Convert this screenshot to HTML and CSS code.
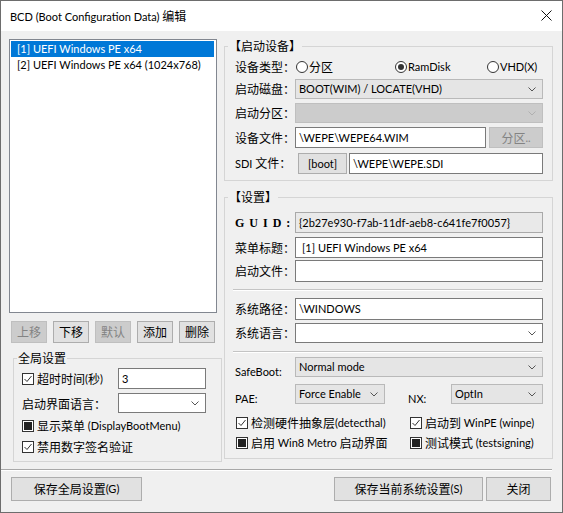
FILE: index.html
```html
<!DOCTYPE html>
<html lang="zh-CN">
<head>
<meta charset="utf-8">
<title>BCD 编辑</title>
<link rel="stylesheet" href="styles.css">
</head>
<body>
<div class="window">
  <div class="titlebar">
    <span class="title">BCD (Boot Configuration Data) <span class="z">编辑</span></span>
    <svg class="close" width="11" height="11" viewBox="0 0 11 11"><path d="M0.5 0.5L10.5 10.5M10.5 0.5L0.5 10.5" stroke="#111" stroke-width="1" fill="none"/></svg>
  </div>
  <div class="client">
    <div class="main">
      <div class="leftcol">
        <div class="listbox">
          <div class="item sel">[1] UEFI Windows PE x64</div>
          <div class="item">[2] UEFI Windows PE x64 (1024x768)</div>
        </div>
        <div class="btnrow">
          <span class="btn sbtn dis z">上移</span>
          <span class="btn sbtn z">下移</span>
          <span class="btn sbtn dis z">默认</span>
          <span class="btn sbtn z">添加</span>
          <span class="btn sbtn z">删除</span>
        </div>
        <fieldset class="group gglobal">
          <legend class="z">全局设置</legend>
          <div class="gbody">
            <div class="row g1">
              <span class="cbitem gcb"><svg class="chk" width="12" height="12" viewBox="0 0 12 12"><rect x="0.5" y="0.5" width="11" height="11" fill="#fff" stroke="#333"/><path d="M2.5 6L5 8.5L9.5 3" fill="none" stroke="#333"/></svg><span class="z">超时时间</span>(<span class="z">秒</span>)</span>
              <span class="edit gedit">3</span>
            </div>
            <div class="row g2">
              <span class="glbl z">启动界面语言：</span>
              <span class="combo white gcombo"><span></span><svg class="chev" width="8" height="5" viewBox="0 0 8 5"><path d="M0.5 0.5L4 4L7.5 0.5" fill="none" stroke="#555"/></svg></span>
            </div>
            <div class="row crow g3">
              <span class="cbitem"><svg class="chk" width="12" height="12" viewBox="0 0 12 12"><rect x="0.5" y="0.5" width="11" height="11" fill="#fff" stroke="#333"/><rect x="2.5" y="2.5" width="7" height="7" fill="#222" stroke="#222"/></svg><span class="z">显示菜单</span>&nbsp;(DisplayBootMenu)</span>
            </div>
            <div class="row crow g4">
              <span class="cbitem"><svg class="chk" width="12" height="12" viewBox="0 0 12 12"><rect x="0.5" y="0.5" width="11" height="11" fill="#fff" stroke="#333"/><path d="M2.5 6L5 8.5L9.5 3" fill="none" stroke="#333"/></svg><span class="z">禁用数字签名验证</span></span>
            </div>
          </div>
        </fieldset>
      </div>
      <div class="rightcol">
        <fieldset class="group gdev">
          <legend class="z">【启动设备】</legend>
          <div class="gbody devbody">
            <div class="row d1">
              <span class="lbl z">设备类型：</span>
              <span class="radio r1"><svg class="rad" width="12" height="12" viewBox="0 0 12 12"><circle cx="6" cy="6" r="5.5" fill="#fff" stroke="#333"/></svg><span class="z">分区</span></span>
              <span class="radio r2"><svg class="rad" width="12" height="12" viewBox="0 0 12 12"><circle cx="6" cy="6" r="5.5" fill="#fff" stroke="#333"/><circle cx="6" cy="6" r="3" fill="#333"/></svg>RamDisk</span>
              <span class="radio r3"><svg class="rad" width="12" height="12" viewBox="0 0 12 12"><circle cx="6" cy="6" r="5.5" fill="#fff" stroke="#333"/></svg>VHD(X)</span>
            </div>
            <div class="row d2">
              <span class="lbl z">启动磁盘：</span>
              <span class="combo gray fill"><span>BOOT(WIM) / LOCATE(VHD)</span><svg class="chev" width="8" height="5" viewBox="0 0 8 5"><path d="M0.5 0.5L4 4L7.5 0.5" fill="none" stroke="#555"/></svg></span>
            </div>
            <div class="row d3">
              <span class="lbl z">启动分区：</span>
              <span class="combo cdis fill"><span></span><svg class="chev" width="8" height="5" viewBox="0 0 8 5"><path d="M0.5 0.5L4 4L7.5 0.5" fill="none" stroke="#b0b0b0"/></svg></span>
            </div>
            <div class="row d4">
              <span class="lbl z">设备文件：</span>
              <span class="edit devfile">\WEPE\WEPE64.WIM</span>
              <span class="btn dis partbtn"><span class="z">分区</span>..</span>
            </div>
            <div class="row d5">
              <span class="lbl sdilbl">SDI <span class="z">文件：</span></span>
              <span class="btn bootbtn">[boot]</span>
              <span class="edit fill">\WEPE\WEPE.SDI</span>
            </div>
          </div>
        </fieldset>
        <fieldset class="group gset">
          <legend class="z">【设置】</legend>
          <div class="gbody setbody">
            <div class="row s1">
              <span class="lbl guid">GUID:</span>
              <span class="edit ro fill">{2b27e930-f7ab-11df-aeb8-c641fe7f0057}</span>
            </div>
            <div class="row s2">
              <span class="lbl z">菜单标题：</span>
              <span class="edit fill indent">[1] UEFI Windows PE x64</span>
            </div>
            <div class="row s3">
              <span class="lbl z">启动文件：</span>
              <span class="edit fill"></span>
            </div>
            <div class="sep s4"></div>
            <div class="row s5">
              <span class="lbl z">系统路径：</span>
              <span class="edit fill">\WINDOWS</span>
            </div>
            <div class="row s6">
              <span class="lbl z">系统语言：</span>
              <span class="combo white fill"><span></span><svg class="chev" width="8" height="5" viewBox="0 0 8 5"><path d="M0.5 0.5L4 4L7.5 0.5" fill="none" stroke="#555"/></svg></span>
            </div>
            <div class="sep s7"></div>
            <div class="row s8">
              <span class="lbl low">SafeBoot:</span>
              <span class="combo gray fill"><span>Normal mode</span><svg class="chev" width="8" height="5" viewBox="0 0 8 5"><path d="M0.5 0.5L4 4L7.5 0.5" fill="none" stroke="#555"/></svg></span>
            </div>
            <div class="row s9">
              <span class="lbl low">PAE:</span>
              <span class="combo gray pae"><span>Force Enable</span><svg class="chev" width="8" height="5" viewBox="0 0 8 5"><path d="M0.5 0.5L4 4L7.5 0.5" fill="none" stroke="#555"/></svg></span>
              <span class="lbl low nx">NX:</span>
              <span class="combo gray fill"><span>OptIn</span><svg class="chev" width="8" height="5" viewBox="0 0 8 5"><path d="M0.5 0.5L4 4L7.5 0.5" fill="none" stroke="#555"/></svg></span>
            </div>
            <div class="row crow s10">
              <span class="cbitem wcol"><svg class="chk" width="12" height="12" viewBox="0 0 12 12"><rect x="0.5" y="0.5" width="11" height="11" fill="#fff" stroke="#333"/><path d="M2.5 6L5 8.5L9.5 3" fill="none" stroke="#333"/></svg><span class="z">检测硬件抽象层</span>(detecthal)</span>
              <span class="cbitem"><svg class="chk" width="12" height="12" viewBox="0 0 12 12"><rect x="0.5" y="0.5" width="11" height="11" fill="#fff" stroke="#333"/><path d="M2.5 6L5 8.5L9.5 3" fill="none" stroke="#333"/></svg><span class="z">启动到</span>&nbsp;WinPE (winpe)</span>
            </div>
            <div class="row crow s11">
              <span class="cbitem wcol"><svg class="chk" width="12" height="12" viewBox="0 0 12 12"><rect x="0.5" y="0.5" width="11" height="11" fill="#fff" stroke="#333"/><rect x="2.5" y="2.5" width="7" height="7" fill="#222" stroke="#222"/></svg><span class="z">启用</span>&nbsp;Win8 Metro&nbsp;<span class="z">启动界面</span></span>
              <span class="cbitem"><svg class="chk" width="12" height="12" viewBox="0 0 12 12"><rect x="0.5" y="0.5" width="11" height="11" fill="#fff" stroke="#333"/><rect x="2.5" y="2.5" width="7" height="7" fill="#222" stroke="#222"/></svg><span class="z">测试模式</span>&nbsp;(testsigning)</span>
            </div>
          </div>
        </fieldset>
      </div>
    </div>
    <div class="hsep"></div>
    <div class="footer">
      <span class="btn fbtn f1"><span class="z">保存全局设置</span>(G)</span>
      <span class="fright">
        <span class="btn fbtn f2"><span class="z">保存当前系统设置</span>(S)</span>
        <span class="btn fbtn f3 z">关闭</span>
      </span>
    </div>
  </div>
</div>
</body>
</html>
```

FILE: styles.css
```css
* { box-sizing: border-box; }
html, body { margin: 0; padding: 0; background: #f0f0f0; }
body {
  font-family: "Lato", "Noto Sans CJK SC", sans-serif;
  font-size: 11px;
  color: #000;
}
.z { font-size: 12px; font-family: "Noto Sans CJK SC", sans-serif; }
.window {
  width: 563px;
  height: 513px;
  border: 1px solid #6d6d6d;
  background: #f0f0f0;
  overflow: hidden;
}
.titlebar {
  height: 30px;
  background: #fff;
  display: flex;
  align-items: center;
  justify-content: space-between;
  padding: 1px 10px 0 9px;
}
.title { line-height: 16px; white-space: nowrap; font-size: 11px; }
.close { margin-top: -3px; }
.client { padding: 8px 0 0 8px; }
.main { display: flex; align-items: flex-start; }
.leftcol { width: 213px; flex: none; }
.rightcol { width: 329px; margin-left: 2px; flex: none; }

.listbox {
  width: 208px;
  height: 274px;
  border: 1px solid #828790;
  background: #fff;
  padding: 1px;
}
.item { height: 16px; line-height: 16px; padding-left: 6px; white-space: nowrap; }
.item.sel { background: #0078d7; color: #fff; width: 203px; }

.btn {
  display: flex;
  align-items: center;
  justify-content: center;
  background: #e1e1e1;
  border: 1px solid #adadad;
  line-height: 14px;
  white-space: nowrap;
  flex: none;
}
.btn.dis { background: #cccccc; border-color: #bfbfbf; color: #838383; }
.btnrow { display: flex; justify-content: space-between; width: 204px; margin: 8px 0 0 2px; }
.sbtn { width: 36px; height: 22px; }

.group { margin: 0; padding: 0; border: 1px solid #d5d5d5; min-width: 0; }
.group legend { padding: 0 1px; line-height: 14px; height: 14px; white-space: nowrap; }

.row { display: flex; align-items: center; }
.crow { height: 14px; }
.chk { flex: none; margin-right: 3px; }
.rad { flex: none; margin-right: 1px; }
.cbitem { display: flex; align-items: center; white-space: nowrap; line-height: 14px; }
.radio { display: flex; align-items: center; white-space: nowrap; line-height: 14px; flex: none; }

.edit {
  display: flex;
  align-items: center;
  background: #fff;
  border: 1px solid #7a7a7a;
  padding: 0 3px;
  height: 100%;
  line-height: 14px;
  white-space: pre;
  overflow: hidden;
}
.edit.ro { background: #e9e9e9; border-color: #a9a9a9; }
.edit.indent { padding-left: 6px; }
.combo {
  display: flex;
  align-items: center;
  justify-content: space-between;
  height: 100%;
  padding: 0 6px 0 3px;
  line-height: 14px;
  white-space: nowrap;
}
.combo.white { background: #fff; border: 1px solid #7a7a7a; }
.combo.gray { background: #e5e5e5; border: 1px solid #b9b9b9; }
.combo.cdis { background: #cccccc; border: 1px solid #bfbfbf; }
.chev { flex: none; }
.fill { flex: 1; min-width: 0; }

/* global group */
.gglobal { width: 209px; margin: 8px 0 0 4px; }
.gglobal legend { margin-left: 3px; }
.gglobal .gbody { padding: 0 0 7px 8px; }
.g1 { height: 21px; margin-top: 3px; }
.gcb { width: 96px; }
.gedit { width: 88px; }
.g2 { height: 20px; margin-top: 4px; }
.glbl { width: 96px; white-space: nowrap; }
.gcombo { width: 88px; }
.g3 { margin-top: 6px; }
.g4 { margin-top: 7px; }

/* device group */
.gdev legend, .gset legend { margin-left: 3px; }
.gbody.devbody { padding: 0 9px 6px 10px; }
.lbl { width: 60px; flex: none; white-space: nowrap; line-height: 14px; }
.sdilbl { width: 63px; }
.d1 { height: 20px; margin-top: 4px; }
.r1 { margin-left: 1px; width: 99px; }
.r2 { width: 92px; }
.d2 { height: 20px; margin-top: 2px; }
.d3 { height: 20px; margin-top: 4px; }
.d4 { height: 21px; margin-top: 4px; }
.devfile { width: 191px; flex: none; }
.partbtn { width: 54px; height: 100%; margin-left: 3px; }
.d5 { height: 21px; margin-top: 5px; }
.bootbtn { width: 49px; height: 100%; margin-right: 2px; }

/* settings group */
.gset { margin-top: 9px; }
.gbody.setbody { padding: 0 9px 8px 10px; }
.guid {
  font-family: "Liberation Serif", serif;
  font-size: 12px;
  font-weight: bold;
  letter-spacing: 5px;
}
.s1 { height: 21px; margin-top: 8px; }
.s2 { height: 21px; margin-top: 4px; }
.s3 { height: 22px; margin-top: 2px; }
.sep {
  height: 2px;
  border-top: 1px solid #c4c4c4;
  border-bottom: 1px solid #ffffff;
  margin-left: -2px;
  margin-right: 1px;
}
.s4 { margin-top: 7px; }
.s5 { height: 22px; margin-top: 7px; }
.s6 { height: 20px; margin-top: 3px; }
.s7 { margin-top: 8px; }
.s8 { height: 20px; margin-top: 4px; }
.low { align-self: flex-end; margin-bottom: -2px; }
.s9 { height: 20px; margin-top: 7px; }
.pae { width: 90px; flex: none; }
.nx { width: 43px; margin-left: 23px; }
.s10 { margin-top: 12px; }
.s11 { margin-top: 6px; }
.wcol { width: 175px; padding-left: 1px; }

/* bottom */
.hsep {
  height: 2px;
  margin: 7px 0 0 -8px;
  width: 551px;
  border-top: 1px solid #a8a8a8;
  border-bottom: 1px solid #ffffff;
}
.footer {
  display: flex;
  justify-content: space-between;
  width: 543px;
  margin-top: 6px;
  padding: 0 1px 0 2px;
}
.fright { display: flex; gap: 3px; }
.fbtn { height: 24px; }
.f1 { width: 131px; }
.f2 { width: 149px; }
.f3 { width: 65px; }
```
